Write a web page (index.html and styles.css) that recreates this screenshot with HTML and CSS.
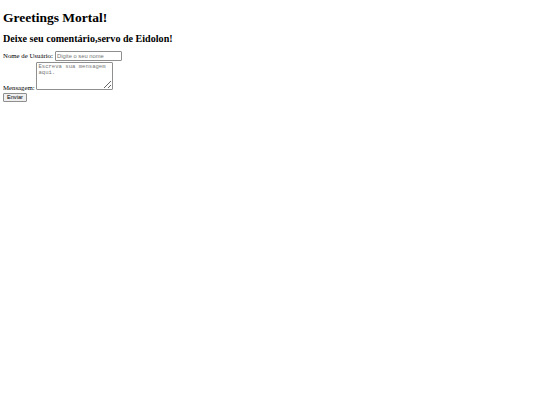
FILE: index.html
```html
<!DOCTYPE html>
<html>
<head>
<meta charset="utf-8">
<link rel="stylesheet" href="styles.css">
</head>
<body class="page">
<h1 class="title">Greetings Mortal!</h1>
<h2 class="subtitle">Deixe seu comentário,servo de Eidolon!</h2>
<form class="form">
<label class="label" for="nome">Nome de Usuário:</label> <input class="field" id="nome" type="text" placeholder="Digite o seu nome"><br>
<label class="label" for="msg">Mensagem:</label> <textarea class="area" id="msg" rows="4" placeholder="Escreva sua mensagem aqui."></textarea><br>
<button class="btn" type="submit">Enviar</button>
</form>
</body>
</html>
```
FILE: styles.css
```css
.page {
  margin: 3px;
  font-family: "Liberation Serif", "Times New Roman", serif;
  font-size: 6.8px;
  color: #000;
  background: #fff;
}
.title {
  font-size: 13.5px;
  font-weight: bold;
  margin: 7px 0 7px;
}
.subtitle {
  font-size: 10.1px;
  font-weight: bold;
  margin: 7px 0 7px;
}
.form {
  margin: 0;
  line-height: 1.15;
}
.label {
  font-size: 6.8px;
}
.field {
  box-sizing: border-box;
  width: 67px;
  height: 10px;
  margin: 0;
  padding: 0 1.5px;
  font-family: "Liberation Sans", Arial, sans-serif;
  font-size: 5.8px;
  border: 1px solid #8f8f8f;
  border-radius: 1px;
  background: #fff;
  vertical-align: baseline;
}
.field::placeholder {
  color: #757575;
}
.area {
  box-sizing: border-box;
  width: 77px;
  height: 28px;
  margin: 1px 0 0 0;
  padding: 1px 1px;
  font-family: "Liberation Mono", "Courier New", monospace;
  font-size: 5.6px;
  line-height: 1.15;
  border: 1px solid #8f8f8f;
  border-radius: 1px;
  background: #fff;
}
.area::placeholder {
  color: #757575;
}
.btn {
  box-sizing: border-box;
  height: 9px;
  margin: 1px 0 0 0;
  padding: 0 3px;
  font-family: "Liberation Sans", Arial, sans-serif;
  font-size: 5.6px;
  line-height: 1;
  color: #000;
  background: #efefef;
  border: 1px solid #8f8f8f;
  border-radius: 1px;
}
```
